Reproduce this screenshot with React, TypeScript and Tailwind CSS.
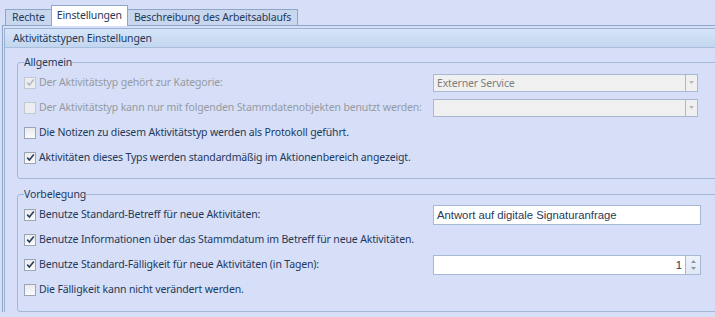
import React from 'react';

type CheckState = {
  checked?: boolean;
  disabled?: boolean;
};

const CheckBox: React.FC<CheckState> = ({ checked, disabled }) => (
  <div
    className={
      'w-[12px] h-[12px] shrink-0 border flex items-center justify-center ' +
      (disabled
        ? 'border-[#c3c8d0] bg-[#eceef1]'
        : 'border-[#9aa5b6] bg-gradient-to-b from-[#e9ebee] to-[#fbfbfc]')
    }
  >
    {checked && (
      <svg width="9" height="9" viewBox="0 0 9 9">
        <path
          d="M1.2 4.6 L3.4 7 L7.8 1.6"
          fill="none"
          stroke={disabled ? '#b4b9c2' : '#2c3f5c'}
          strokeWidth="1.6"
        />
      </svg>
    )}
  </div>
);

interface RowProps extends CheckState {
  label: string;
  children?: React.ReactNode;
}

const Row: React.FC<RowProps> = ({ label, checked, disabled, children }) => (
  <div className="flex items-center h-[25px]">
    <div className="flex items-center w-[409px]">
      <CheckBox checked={checked} disabled={disabled} />
      <span className={'ml-[3px] whitespace-nowrap ' + (disabled ? 'text-[#959aa2]' : '')}>{label}</span>
    </div>
    {children}
  </div>
);

const ComboBox: React.FC<{ value?: string }> = ({ value }) => (
  <div className="flex w-[265px] h-[18px] border border-[#a7b8d3] bg-[#f0f0f0]">
    <div className="flex-1 pl-[3px] leading-[16px] text-[#7d7d7d]">{value}</div>
    <div className="w-[12px] border-l border-[#a7b8d3] flex items-center justify-center">
      <svg width="5" height="3" viewBox="0 0 5 3">
        <path d="M0 0 H5 L2.5 3 Z" fill="#b5b9bf" />
      </svg>
    </div>
  </div>
);

const Tab: React.FC<{ active?: boolean; children: React.ReactNode }> = ({ active, children }) => (
  <div
    className={
      'border border-b-0 border-[#8fa6c9] whitespace-nowrap ' +
      (active
        ? 'h-[21px] px-[5px] bg-white leading-[19px] -mb-[1px] relative z-10 -mx-[1px]'
        : 'h-[16px] px-[6px] bg-[#c8d7ee] leading-[15px]')
    }
  >
    {children}
  </div>
);

const App: React.FC = () => {
  return (
    <div className="w-[715px] h-[317px] overflow-hidden bg-[#d6dff7] text-[10.5px] tracking-[-0.15px] text-[#1e395b] font-['Noto_Sans',sans-serif]">
      <div className="flex items-end h-[25px] pl-[5px]">
        <Tab>Rechte</Tab>
        <Tab active>Einstellungen</Tab>
        <Tab>Beschreibung des Arbeitsablaufs</Tab>
      </div>

      <div className="ml-[2px] border-l border-t border-[#8ea6c9]">
        <div className="ml-[1px] mt-[2px] border-l border-t border-[#9db2d3]">
          <div className="h-[19px] pl-[8px] leading-[18px] border-b border-[#aabfdc] bg-gradient-to-b from-[#d6e5f8] to-[#c3d6ef]">
            Aktivitätstypen Einstellungen
          </div>

          <div className="pl-[12px] pt-[6px]">
            <fieldset className="w-[720px] border border-[#a5b7d4] rounded-[3px] px-[6px] pb-[8px]">
              <legend className="leading-[16px]">Allgemein</legend>
              <Row label="Der Aktivitätstyp gehört zur Kategorie:" checked disabled>
                <ComboBox value="Externer Service" />
              </Row>
              <Row label="Der Aktivitätstyp kann nur mit folgenden Stammdatenobjekten benutzt werden:" disabled>
                <ComboBox />
              </Row>
              <Row label="Die Notizen zu diesem Aktivitätstyp werden als Protokoll geführt." />
              <Row label="Aktivitäten dieses Typs werden standardmäßig im Aktionenbereich angezeigt." checked />
            </fieldset>

            <fieldset className="mt-[7px] w-[720px] border border-[#a5b7d4] rounded-[3px] px-[6px] pb-[9px]">
              <legend className="leading-[16px]">Vorbelegung</legend>
              <Row label="Benutze Standard-Betreff für neue Aktivitäten:" checked>
                <div className="w-[268px] h-[20px] border border-[#a7b8d3] bg-white pl-[3px] leading-[18px] tracking-normal text-[11.3px] text-[#2a3a57] font-['Liberation_Sans',sans-serif]">
                  Antwort auf digitale Signaturanfrage
                </div>
              </Row>
              <Row label="Benutze Informationen über das Stammdatum im Betreff für neue Aktivitäten." checked />
              <Row label="Benutze Standard-Fälligkeit für neue Aktivitäten (in Tagen):" checked>
                <div className="flex w-[268px] h-[20px] border border-[#a7b8d3] bg-white">
                  <div className="flex-1 pr-[3px] text-right leading-[18px] tracking-normal text-[11.3px] text-[#2a3a57] font-['Liberation_Sans',sans-serif]">
                    1
                  </div>
                  <div className="w-[15px] border-l border-[#a7b8d3] bg-gradient-to-b from-[#eef3fa] to-[#dfe7f3] flex flex-col items-center justify-center gap-[4px]">
                    <svg width="5" height="3" viewBox="0 0 5 3">
                      <path d="M0 3 H5 L2.5 0 Z" fill="#8a96a8" />
                    </svg>
                    <svg width="5" height="3" viewBox="0 0 5 3">
                      <path d="M0 0 H5 L2.5 3 Z" fill="#8a96a8" />
                    </svg>
                  </div>
                </div>
              </Row>
              <Row label="Die Fälligkeit kann nicht verändert werden." />
            </fieldset>
          </div>
        </div>
      </div>
    </div>
  );
};

export default App;
